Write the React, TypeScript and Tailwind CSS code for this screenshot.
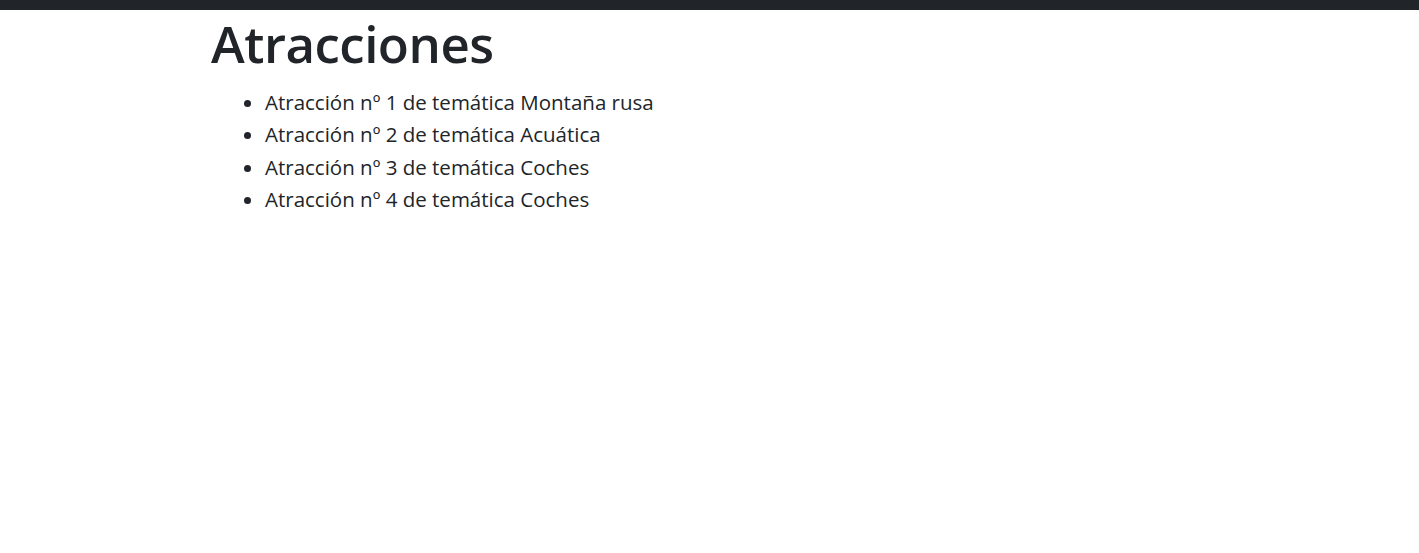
export default function App() {
  const items = [
    "Atracción nº 1 de temática Montaña rusa",
    "Atracción nº 2 de temática Acuática",
    "Atracción nº 3 de temática Coches",
    "Atracción nº 4 de temática Coches",
  ];
  return (
    <div className="min-h-[553px] bg-white text-[#212529]" style={{ fontFamily: '"Open Sans", "Noto Sans", sans-serif' }}>
      <div className="h-[10px] bg-[#212529]" />
      <main className="pl-[211px]">
        <h1 className="m-0 mb-[9px] text-[51px] font-semibold leading-[67px] tracking-[-0.5px]">Atracciones</h1>
        <ul className="list-disc pl-[54px] text-[20.5px] leading-[32.4px]">
          {items.map((t) => (
            <li key={t}>{t}</li>
          ))}
        </ul>
      </main>
    </div>
  );
}
